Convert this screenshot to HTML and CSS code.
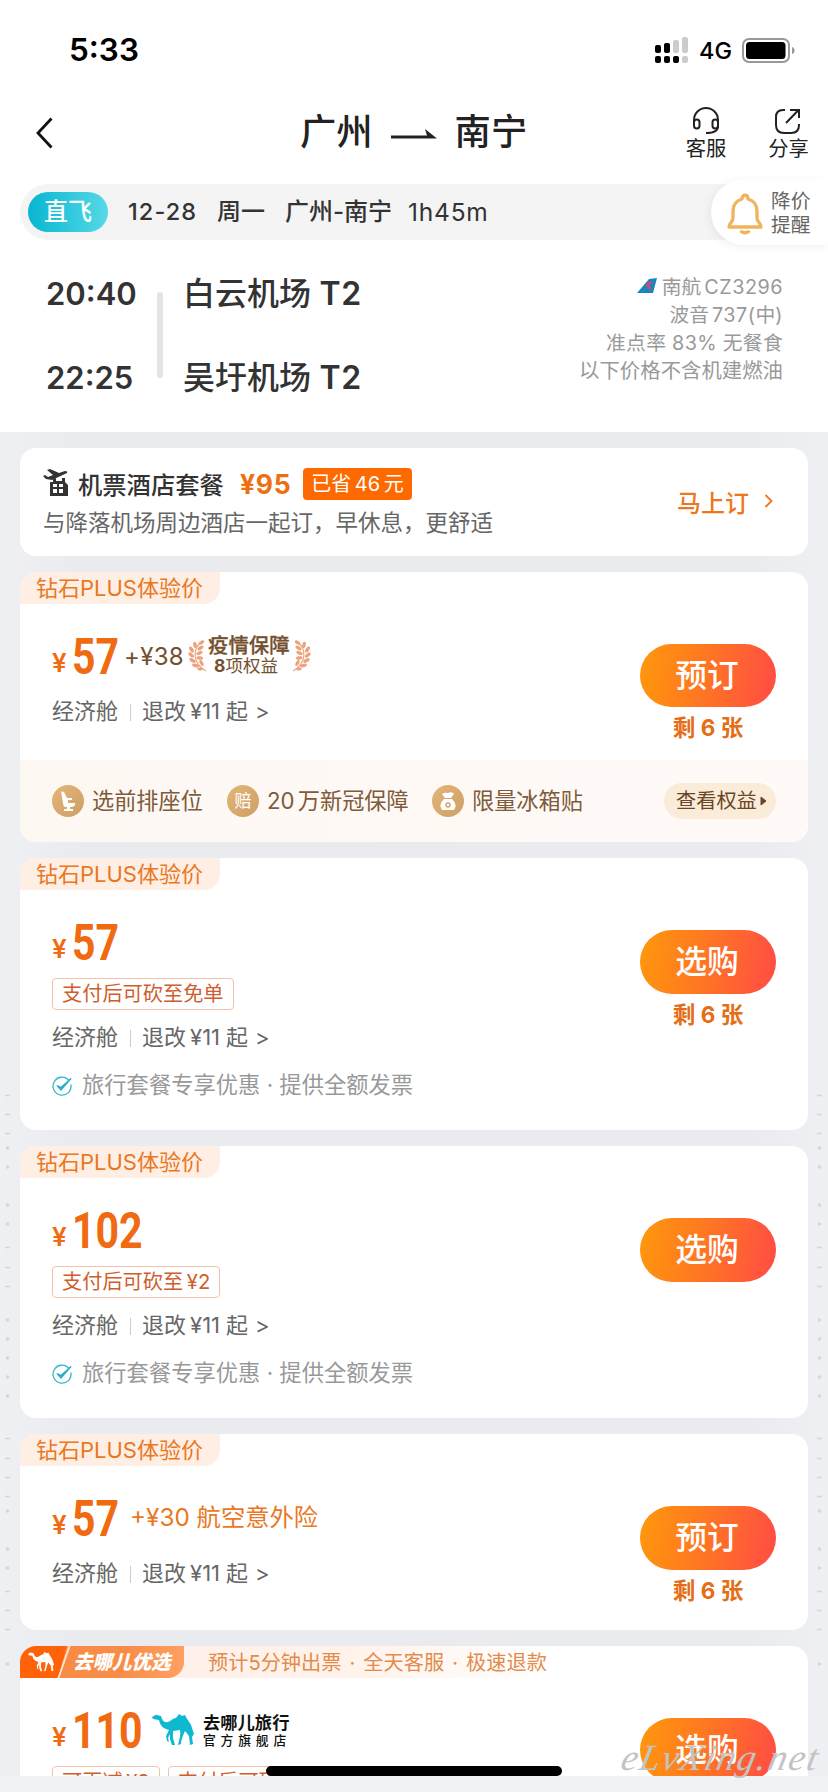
FILE: index.html
```html
<!DOCTYPE html>
<html lang="zh-CN">
<head>
<meta charset="utf-8">
<title>广州 南宁</title>
<link rel="stylesheet" href="styles.css">
</head>
<body>
<svg class="defs" width="0" height="0">
  <symbol id="camel" viewBox="0 0 42 32"><path d="M0 3 4 .8 9 2C10 6 12 9 16 8 19 7 21 4 24 4L27 0 30 2 33 1C35 6 39 9 40 14L42 20 40 23 41 30 38 31 37 22 33 17C31 21 29 26 29 30L26 31C27 26 29 21 28 16L21 17V24L23 31 20 31 18 25V20L16 24 17 28 15 27 14 22 17 16C12 15 8 12 7 6L1 5Z"/></symbol>
  <symbol id="laurel" viewBox="0 0 19 32"><path d="M15 1C4 8 4 23 18 31" fill="none" stroke="#e9a783" stroke-width="1.2"/><g fill="#eda27b"><ellipse cx="13.500" cy="2.500" rx="3" ry="1.700" transform="rotate(-30 13.500 2.500)"/><ellipse cx="7" cy="5" rx="1.800" ry="3.200" transform="rotate(-10 7 5)"/><ellipse cx="12.500" cy="8" rx="3.400" ry="1.700" transform="rotate(-32 12.500 8)"/><ellipse cx="3.500" cy="9.500" rx="1.800" ry="3.400" transform="rotate(-32 3.500 9.500)"/><ellipse cx="11.500" cy="13" rx="3.400" ry="1.700" transform="rotate(-28 11.500 13)"/><ellipse cx="3.200" cy="15" rx="1.800" ry="3.400" transform="rotate(-48 3.200 15)"/><ellipse cx="11.800" cy="18" rx="3.300" ry="1.700" transform="rotate(10 11.800 18)"/><ellipse cx="4.500" cy="20.500" rx="1.800" ry="3.500" transform="rotate(-62 4.500 20.500)"/><ellipse cx="13.500" cy="23" rx="1.700" ry="3.200" transform="rotate(-30 13.500 23)"/><ellipse cx="7.500" cy="25.500" rx="1.800" ry="3.500" transform="rotate(-75 7.500 25.500)"/><ellipse cx="12" cy="29" rx="1.500" ry="2.800" transform="rotate(-85 12 29)"/></g></symbol>
  <symbol id="check" viewBox="0 0 20 20"><path d="M16.600 4A9 9 0 1 0 18.900 8.500" fill="none" stroke="#38b5ca" stroke-width="1.300"/><path d="M5 9.500 9 14 19 2.500 9 11.500Z" fill="#27b0c6" stroke="#27b0c6" stroke-width="1.300"/></symbol>
</svg>
<div class="screen">
  <header class="top">
    <div class="status">
      <span class="clock">5:33</span>
      <svg class="signal" viewBox="0 0 33 26"><g><rect y="8" width="6" height="8" rx="2"/><rect x="9" y="6" width="6" height="10" rx="2"/><rect x="18" y="3" width="6" height="13" rx="2" fill="#ccc"/><rect x="27" width="6" height="16" rx="2" fill="#ccc"/><rect y="19" width="6" height="7" rx="2"/><rect x="9" y="19" width="6" height="7" rx="2"/><rect x="18" y="19" width="6" height="7" rx="2"/><rect x="27" y="19" width="6" height="7" rx="2" fill="#ccc"/></g></svg>
      <span class="net">4G</span>
      <svg class="battery" viewBox="0 0 53 25"><rect x="1" y="1" width="46" height="23" rx="6" fill="#fff" stroke="#999" stroke-width="2"/><rect x="4" y="4" width="39.500" height="17" rx="3.500"/><path d="M50 9C53.500 10 53.500 15 50 16Z" fill="#999"/></svg>
    </div>
    <div class="nav">
      <svg class="back" viewBox="0 0 17 32"><path d="M15.500 1.500 2 16 15.500 30.500" fill="none" stroke="#111" stroke-width="2.800"/></svg>
      <div class="title"><span>广州</span><svg viewBox="0 0 46 10" width="46" height="10"><path d="M0 6.500H36L34 0 46 9.500H0Z" fill="#222"/></svg><span>南宁</span></div>
      <div class="action first"><svg viewBox="0 0 28 28"><g fill="none" stroke="#222" stroke-width="2"><path d="M2 16V13A12 12 0 0 1 26 13V19C26 24 22 26 14 26"/><rect x="2" y="12.500" width="5.500" height="9" rx="2.700"/><rect x="20.500" y="12.500" width="5.500" height="9" rx="2.700"/></g></svg><span>客服</span></div>
      <div class="action share"><svg viewBox="0 0 28 28"><g fill="none" stroke="#222" stroke-width="2"><path d="M12 3H10Q3 3 3 10V18Q3 26 11 26H18Q26 26 26 18V17"/><path d="M13 16 25.500 3M17 3H26V11"/></g></svg><span>分享</span></div>
    </div>
    <div class="summary">
      <span class="direct">直飞</span><span class="date">12-28</span><span class="week">周一</span><span class="route">广州-南宁</span><span class="dur">1h45m</span>
      <div class="alert"><svg viewBox="0 0 36 42"><g fill="none" stroke="#f0b45c" stroke-width="3.300" stroke-linejoin="round"><path d="M15 6C15 1 21 1 21 6C28 8 30 12 30 18V25C30 29 34 30 34 34H2C2 30 6 29 6 25V18C6 12 8 8 15 6Z"/><path d="M14 37.500C15 40.500 21 40.500 22 37.500"/></g></svg><span>降价<br>提醒</span></div>
    </div>
    <div class="flight">
      <div class="times"><span>20:40</span><span>22:25</span></div>
      <i class="span-line"></i>
      <div class="ports"><span>白云机场 <b>T2</b></span><span>吴圩机场 <b>T2</b></span></div>
      <div class="info">
        <div><svg width="20" height="16" viewBox="0 0 20 16"><path d="M0 15 12 1 20 0 16 15Z" fill="#1688bd"/><path d="M9 6Q13 1 16 5L12 7 15 10 12 13Q12 9 9 8Z" fill="#cf4778"/></svg>南航 <span class="lat">CZ3296</span></div>
        <div>波音 <span class="lat">737(</span>中<span class="lat">)</span></div>
        <div class="rate">准点率 83% 无餐食</div>
        <div class="fees">以下价格不含机建燃油</div>
      </div>
    </div>
  </header>

  <main class="list">
    <svg class="marks" width="828" height="580" viewBox="0 0 828 580">
      <g id="marks-left" stroke="#d3d6da" stroke-width="1.500"><path d="M5 5.500h5M5 24.500h5M5 43.500h5M5 157.500h5M5 177.500h5M5 196.500h5M5 348.500h5M5 368.500h5M5 387.500h5M5 406.500h5M5 501.500h5M5 520.500h5M5 539.500h5"/><path stroke-width="3.500" stroke-linecap="round" d="M7.500 58v.1M7.500 77v.1M7.500 115v.1M7.500 134v.1M7.500 230v.1M7.500 249v.1M7.500 268v.1M7.500 287v.1M7.500 306v.1M7.500 421v.1M7.500 459v.1M7.500 478v.1M7.500 574v.1"/></g>
      <use href="#marks-left" x="812"/>
    </svg>
    <section class="card package">
      <div class="pk-text">
        <div class="pk-head"><svg width="27" height="28" viewBox="0 0 27 28" fill="#333"><path d="M0 7 2 6 5 8 10 6 4 1 7 0 16 4 22 2Q25 2 24 4L9 11 3 10Z"/><path fill-rule="evenodd" d="M7 13H10V10L13 9V12H19V9H22V13L25 16V27H7ZM10 15V18H14V15ZM16 15V18H20V15ZM10 20V24H14V20ZM16 20V24H20V20Z"/></svg><b class="pk-name">机票酒店套餐</b><b class="pk-price">¥95</b><span class="saved">已省 46 元</span></div>
        <div class="pk-sub">与降落机场周边酒店一起订，早休息，更舒适</div>
      </div>
      <div class="go">马上订<svg width="9" height="14" viewBox="0 0 9 14"><path d="M1.500 1 7.500 7 1.500 13" fill="none" stroke="#ee761d" stroke-width="1.800"/></svg></div>
    </section>

    <section class="card c-benefit">
      <div class="plus">钻石PLUS体验价</div>
      <div class="fare">
        <div class="left">
          <div class="price"><i>¥</i><b class="n2"><span>57</span></b><span class="add">+¥38</span><svg class="laurel"><use href="#laurel"/></svg><span class="guard"><b>疫情保障</b><small><b>8</b>项权益</small></span><svg class="laurel flip"><use href="#laurel"/></svg></div>
          <div class="cabin"><span>经济舱</span><i></i><span>退改</span><span class="fee">¥11</span><span>起</span><span class="gt">&gt;</span></div>
        </div>
        <div class="buy"><span class="btn">预订</span><span class="left-n">剩 6 张</span></div>
      </div>
      <div class="benefits">
        <div class="benefit b1"><span class="dot"><svg viewBox="0 0 32 32"><path d="M9 6.500 12 7 15 13H20V15H16V18H23V20Q22 22 18 22V24H21V26H12V24H15V22H13Q11 21 11 18Z" fill="#fff"/></svg></span>选前排座位</div>
        <div class="benefit b2"><span class="dot">赔</span>20 万新冠保障</div>
        <div class="benefit"><span class="dot"><svg viewBox="0 0 32 32"><path d="M10 9Q13 7 16 8Q20 6 22 9L19 13H13ZM12 14H20Q26 20 22 25H10Q6 20 12 14Z" fill="#fff"/><circle cx="16" cy="20" r="2" fill="#fff" stroke="#d4a466" stroke-width="1.500"/></svg></span>限量冰箱贴</div>
        <div class="see">查看权益<svg width="7" height="10" viewBox="0 0 7 10"><path d="M1 1 6 5 1 9Z" fill="#6b4526" stroke="#6b4526" stroke-linejoin="round"/></svg></div>
      </div>
    </section>

    <section class="card c-tall">
      <div class="plus">钻石PLUS体验价</div>
      <div class="fare">
        <div class="left">
          <div class="price"><i>¥</i><b class="n2"><span>57</span></b></div>
          <div class="tags"><span>支付后可砍至免单</span></div>
          <div class="cabin"><span>经济舱</span><i></i><span>退改</span><span class="fee">¥11</span><span>起</span><span class="gt">&gt;</span></div>
          <div class="note"><svg><use href="#check"/></svg>旅行套餐专享优惠 · 提供全额发票</div>
        </div>
        <div class="buy"><span class="btn">选购</span><span class="left-n">剩 6 张</span></div>
      </div>
    </section>

    <section class="card c-tall">
      <div class="plus">钻石PLUS体验价</div>
      <div class="fare">
        <div class="left">
          <div class="price"><i>¥</i><b class="n3"><span>102</span></b></div>
          <div class="tags"><span>支付后可砍至 ¥2</span></div>
          <div class="cabin"><span>经济舱</span><i></i><span>退改</span><span class="fee">¥11</span><span>起</span><span class="gt">&gt;</span></div>
          <div class="note"><svg><use href="#check"/></svg>旅行套餐专享优惠 · 提供全额发票</div>
        </div>
        <div class="buy"><span class="btn">选购</span></div>
      </div>
    </section>

    <section class="card c-short">
      <div class="plus">钻石PLUS体验价</div>
      <div class="fare">
        <div class="left">
          <div class="price"><i>¥</i><b class="n2"><span>57</span></b><span class="insure">+¥30 航空意外险</span></div>
          <div class="cabin"><span>经济舱</span><i></i><span>退改</span><span class="fee">¥11</span><span>起</span><span class="gt">&gt;</span></div>
        </div>
        <div class="buy"><span class="btn">预订</span><span class="left-n">剩 6 张</span></div>
      </div>
    </section>

    <section class="card c-last">
      <div class="select-row"><div class="select"><svg class="camel-s"><use href="#camel"/></svg><i></i><b>去哪儿优选</b></div><span class="promise">预计5分钟出票 · 全天客服 · 极速退款</span></div>
      <div class="fare">
        <div class="left">
          <div class="price"><i>¥</i><b class="n3"><span>110</span></b><svg class="camel"><use href="#camel"/></svg><span class="store"><b>去哪儿旅行</b><small>官方旗舰店</small></span></div>
          <div class="tags"><span>可再减 ¥3</span><span>支付后可砍至 ¥10</span></div>
        </div>
        <div class="buy"><span class="btn">选购</span></div>
      </div>
    </section>
  </main>
  <div class="home"></div>
  <div class="watermark">eLvXing.net</div>
</div>
</body>
</html>
```
FILE: styles.css
```css
* { box-sizing: border-box; }
body { margin: 0; background: #f0f2f5; font-family: Inter, "Noto Sans CJK SC", sans-serif; color: #333; }
i { font-style: normal; }
svg { display: block; flex: none; }
.defs { position: absolute; }
.screen { position: relative; width: 828px; height: 1792px; overflow: hidden; }
.top { height: 432px; background: #fff; }

.status { display: flex; align-items: center; height: 100px; padding-left: 69px; color: #000; }
.clock { width: 586px; font-size: 31.5px; font-weight: 600; line-height: 40px; }
.signal { width: 33px; height: 26px; }
.net { width: 42px; margin-left: 11px; margin-top: 2px; font-size: 23.5px; font-weight: 500; line-height: 30px; }
.battery { width: 53px; height: 25px; margin-left: 1px; }

.nav { display: flex; height: 84px; padding-left: 36px; color: #222; }
.back { width: 17px; height: 32px; margin-top: 17px; }
.title { display: flex; align-items: center; width: 228px; height: 64px; margin-left: 247px; font-size: 36.3px; font-weight: 500; line-height: 64px; }
.title svg { margin: 3px 18px 0; }
.action { display: flex; flex-direction: column; align-items: center; width: 44px; margin-left: 37px; padding-top: 7px; font-size: 20.3px; line-height: 24px; }
.action.first { margin-left: 156px; }
.action svg { width: 28px; height: 28px; margin-bottom: 2px; }
.action.share span { margin-left: 3px; }
.action.share svg { margin-left: -1px; }

.summary { display: flex; align-items: center; height: 56px; margin-left: 20px; padding-left: 8px; background: #f4f4f4; border-radius: 28px 0 0 28px; font-size: 23.5px; font-weight: 500; line-height: 40px; }
.direct { width: 80px; height: 40px; border-radius: 20px; background: linear-gradient(90deg, #07b6d1, #56d9e6); color: #fff; font-size: 24px; text-align: center; }
.date { width: 89px; margin-left: 20px; letter-spacing: 1.1px; }
.week { width: 68px; font-size: 24px; }
.route { width: 123px; font-size: 24px; }
.dur { width: 303px; font-size: 24.5px; font-weight: 400; letter-spacing: .8px; }
.alert { display: flex; align-items: center; width: 117px; height: 66px; padding-left: 16px; border-radius: 33px 0 0 33px; background: #fff; box-shadow: -2px 2px 8px rgba(0,0,0,.06); color: #666; font-size: 19.8px; font-weight: 400; line-height: 24px; }
.alert svg { width: 36px; height: 42px; margin-right: 8px; margin-top: 3px; }
.alert span { margin-top: 2px; }

.flight { display: flex; padding-left: 46px; padding-top: 34px; }
.times, .ports { display: flex; flex-direction: column; gap: 44px; font-size: 31px; font-weight: 600; line-height: 40px; }
.times { width: 111px; }
.span-line { width: 6px; height: 86px; margin-top: 18px; border-radius: 3px; background: #e3e3e3; }
.ports { width: 300px; margin-left: 20px; font-size: 32px; font-weight: 500; }
.ports b { font-weight: 600; letter-spacing: .5px; }
.info { flex: 1; margin-top: -1px; padding-right: 45px; color: #999; font-size: 19.8px; line-height: 28px; text-align: right; white-space: nowrap; }
.info div { display: flex; justify-content: flex-end; align-items: center; }
.info .lat { margin-left: 3px; letter-spacing: .5px; }
.info .lat + .lat { margin-left: 0; }
.info .rate { letter-spacing: .3px; }
.info svg { margin-right: 5px; margin-top: -2px; }
.info .fees { font-size: 20.4px; }

.list { position: relative; display: flex; flex-direction: column; gap: 16px; height: 1344px; padding: 16px 20px 0; overflow: hidden; background: linear-gradient(90deg, #eef0f3, #e9ebee 10%, #e9ebee 90%, #eef0f3); }
.marks { position: absolute; left: 0; top: 658px; }
.card { position: relative; flex: none; overflow: hidden; border-radius: 16px; background: #fff; }

.package { display: flex; justify-content: space-between; height: 108px; padding: 18px 35px 0 23px; }
.pk-head { display: flex; align-items: center; height: 36px; }
.pk-head svg { margin-top: -3px; }
.pk-name { width: 147px; margin-left: 8px; margin-top: -2px; font-size: 24.3px; font-weight: 500; white-space: nowrap; }
.pk-price { width: 54px; margin-left: 15px; font-size: 26.5px; font-weight: 700; letter-spacing: .7px; color: #ee6f12; }
.saved { width: 109px; height: 32px; margin-left: 9px; border-radius: 4px; background: #fe6a00; color: #fff; font-size: 20px; line-height: 32px; text-align: center; word-spacing: -2px; }
.pk-sub { margin-top: 5px; color: #666; font-size: 22.5px; line-height: 32px; }
.go { display: flex; align-items: center; gap: 15px; height: 70px; color: #ee761d; font-size: 24px; font-weight: 500; }

.c-benefit { height: 270px; }
.c-tall { height: 272px; }
.c-short { height: 196px; }
.c-last { height: 300px; }
.plus { width: 200px; height: 32px; padding-left: 16px; border-radius: 0 0 16px 0; background: #ffeee3; color: #e97824; font-size: 22px; line-height: 32px; }
.fare { display: flex; justify-content: space-between; padding: 26px 32px 0; }
.price { display: flex; align-items: center; height: 52px; color: #f06a12; }
.price > i { width: 20px; padding-top: 13px; font-size: 26px; font-weight: 600; line-height: 32px; }
.price > b { height: 52px; margin-top: 1px; font: 700 50px/52px Roboto, sans-serif; }
.price > b span { display: inline-block; transform: scaleX(.82); transform-origin: 0 50%; }
.n2 { width: 48px; }
.n3 { width: 71px; }
.add { width: 67px; padding-left: 4px; color: #75502f; font-size: 24px; letter-spacing: .3px; }
.laurel { width: 19px; height: 32px; margin-left: 1px; }
.flip { margin-left: 2px; transform: scaleX(-1); }
.guard { display: flex; flex-direction: column; width: 82px; margin-left: 1px; color: #75502f; font-size: 20.4px; line-height: 20px; }
.guard > b { font-weight: 500; -webkit-text-stroke: .3px #75502f; }
.guard small { margin-left: 6px; font-size: 17.500px; line-height: 20px; }
.insure { margin-left: 10px; margin-top: -5px; font-size: 24.3px; color: #ea7822; white-space: nowrap; }
.cabin { display: flex; align-items: center; height: 32px; margin-top: 13px; color: #666; font-size: 22px; line-height: 32px; }
.cabin i { width: 1px; height: 17px; margin: 2px 11px 0 12px; background: #ccc; }
.cabin .fee { width: 36px; margin-left: 4px; }
.cabin .gt { margin-left: 7px; }
.tags { display: flex; gap: 8px; margin-top: 10px; }
.tags span { height: 32px; padding: 0 9px; border: 1px solid #f2c1aa; border-radius: 4px; color: #cf5d2e; font-size: 20.2px; line-height: 30px; white-space: nowrap; word-spacing: -2px; }
.tags + .cabin { margin-top: 11px; }
.note { display: flex; align-items: center; height: 32px; margin-top: 16px; color: #999; font-size: 22.3px; line-height: 32px; white-space: nowrap; }
.note svg { width: 20px; height: 20px; margin-right: 10px; margin-top: 2px; }
.buy { display: flex; flex-direction: column; align-items: center; width: 136px; padding-top: 14px; }
.btn { width: 136px; height: 64px; padding-right: 2px; border-radius: 32px; background: linear-gradient(100deg, #ff980b, #ff7821 45%, #ff4b45); color: #fff; font-size: 31.8px; font-weight: 500; line-height: 63px; text-align: center; }
.left-n { margin-top: 5px; color: #e66d16; font-size: 22.5px; font-weight: 700; line-height: 32px; }

.benefits { display: flex; align-items: center; height: 82px; margin-top: 26px; padding: 0 32px; background: linear-gradient(90deg, #fdf8f2, #fffaf8); color: #7d5b3b; font-size: 22.2px; line-height: 32px; }
.c-benefit .fare { height: 130px; }
.benefit { display: flex; align-items: center; gap: 8px; white-space: nowrap; word-spacing: -3px; }
.b1 { width: 175px; }
.b2 { width: 205px; }
.dot { display: flex; align-items: center; justify-content: center; width: 32px; height: 32px; border-radius: 16px; background: linear-gradient(135deg, #e3b679, #cf9f66); color: #fff; font-size: 17px; }
.dot svg { width: 32px; height: 32px; }
.see { display: flex; align-items: center; gap: 3px; width: 112px; height: 36px; margin-left: auto; padding-left: 12px; border-radius: 18px; background: #fbecd9; color: #6b4526; font-size: 20.2px; }

.select-row { display: flex; width: 535px; height: 32px; background: linear-gradient(90deg, #fff0e8, #fff2ea 60%, #fff); }
.select { display: flex; flex: none; align-items: center; width: 164px; border-radius: 0 0 16px 0; overflow: hidden; background: linear-gradient(105deg, #ff6208 0 27%, #f88b45 27% 60%, #ffa265); }
.camel-s { width: 26px; height: 20px; margin-left: 8px; fill: #fff; }
.select i { width: 2px; height: 34px; margin-left: 9px; background: #ffe3d0; transform: skewX(-19deg); }
.select b { margin-left: 8px; color: #fff; font-size: 19.5px; font-style: italic; font-weight: 900; line-height: 32px; white-space: nowrap; }
.promise { margin-left: 24px; color: #e38b4b; font-size: 20.2px; line-height: 34px; white-space: nowrap; word-spacing: 2.4px; }
.camel { width: 42px; height: 32px; margin-left: 9px; fill: #0cb9d1; }
.store { display: flex; flex-direction: column; margin-top: 2px; margin-left: 9px; color: #111; white-space: nowrap; }
.store b { font-size: 17.3px; line-height: 19px; }
.store small { font-size: 12.800px; font-weight: 500; letter-spacing: 4.8px; line-height: 18px; }

.home { position: absolute; left: 266px; top: 1766px; width: 296px; height: 10px; border-radius: 5px; background: #000; }
.watermark { position: absolute; left: 622px; top: 1736px; color: #c3c3c3; font: italic 37px/44px "Liberation Serif", serif; letter-spacing: 1.800px; white-space: nowrap; transform: skewX(-12deg); }
```
